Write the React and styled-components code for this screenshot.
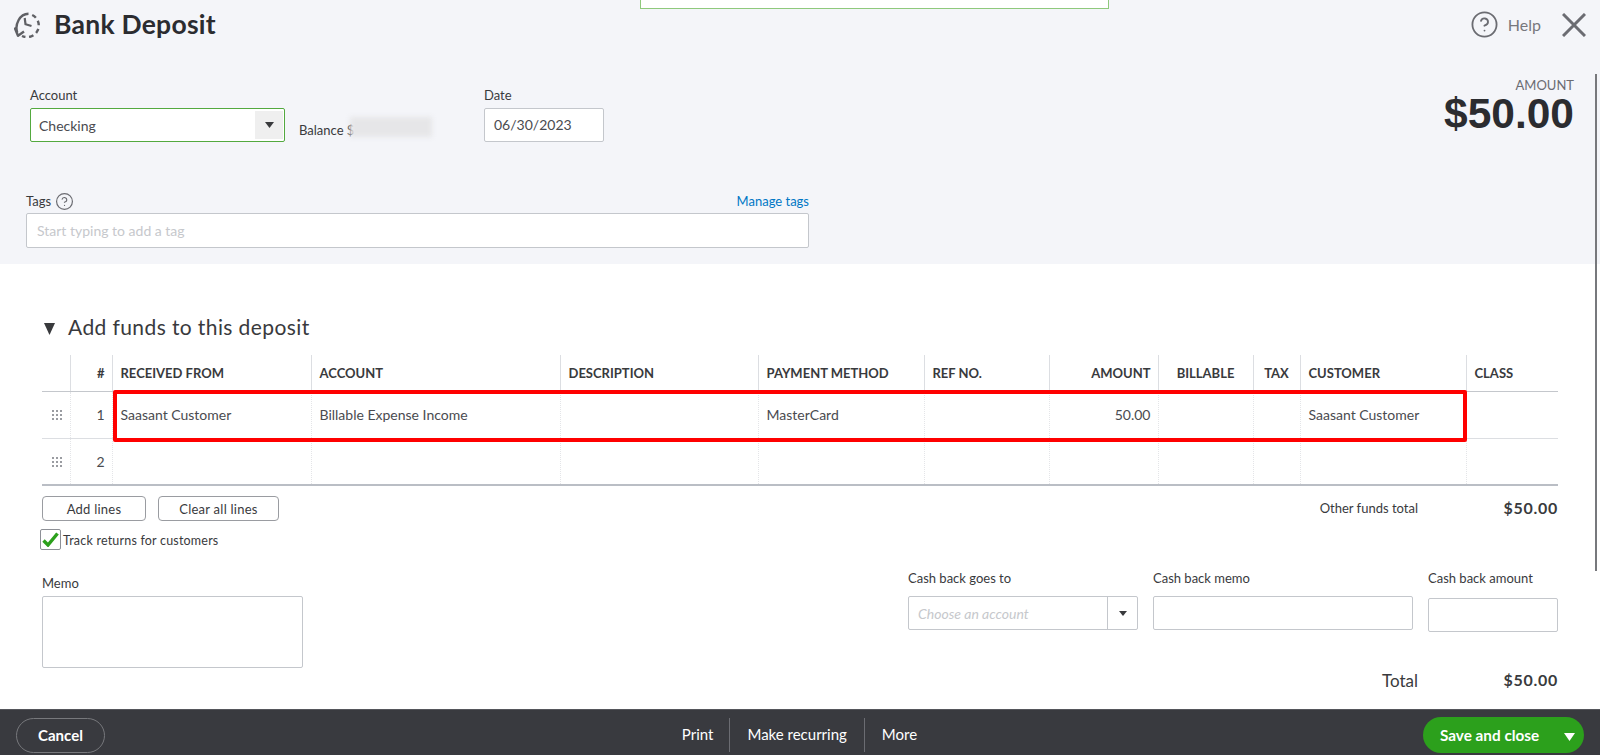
import React from "react";
import styled, { createGlobalStyle } from "styled-components";
import { CircleHelp } from "lucide-react";

const Global = createGlobalStyle`
  html, body { margin: 0; padding: 0; background: #fff; }
  body { font-family: Lato, "Open Sans", "Liberation Sans", sans-serif; color: #393a3d; }
  * { box-sizing: border-box; }
`;

const Page = styled.div`
  position: relative; width: 1600px; height: 755px; overflow: hidden;
  display: flex; flex-direction: column; background: #fff;
`;
const Notice = styled.div`
  position: absolute; top: 0; left: 640px; width: 469px; height: 9px;
  background: #fff; border: 1px solid #8fc97c; border-top: 0;
`;
const Scroll = styled.div`
  position: absolute; top: 74px; left: 1595px; width: 2px; height: 497px; background: #77787c;
`;
const Header = styled.header`
  height: 264px; flex: none; background: #f4f5f9; padding: 12px 14px 0;
`;
const TitleBar = styled.div`
  height: 25px; display: flex; align-items: center; justify-content: space-between;
`;
const TitleGroup = styled.div`display: flex; align-items: center; gap: 13px;`;
const Title = styled.h1`
  margin: 0; font-size: 26.5px; font-weight: 700; color: #2b2c30; line-height: 25px; letter-spacing: 0.25px;
`;
const HelpGroup = styled.div`display: flex; align-items: center; color: #6b6c72;`;
const HelpText = styled.span`font-size: 16px; margin-left: 9px; margin-right: 21px; color: #77787d;`;
const FieldRow = styled.div`
  height: 116px; margin-top: 40px; padding: 0 12px 0 16px;
  display: flex; justify-content: space-between;
`;
const FieldGroup = styled.div`display: flex; padding-top: 10px;`;
const Field = styled.div`
  width: ${(p) => p.$w}px; display: flex; flex-direction: column; gap: 5px;
`;
const Label = styled.label`
  font-size: 13px; line-height: 16px; color: #393a3d; white-space: nowrap;
`;
const SelectBox = styled.div`
  height: 34px; display: flex; align-items: center; justify-content: space-between;
  background: #fff; border: 1px solid #53a93f; border-radius: 2px; padding: 2px 1px 2px 8px;
  font-size: 14px; color: #4a4b50;
`;
const ArrowBox = styled.div`
  width: 28px; align-self: stretch; background: #efefef;
  display: flex; align-items: center; justify-content: center;
`;
const Balance = styled.div`
  position: relative; width: 185px; margin-left: 14px; padding-top: 35px;
  font-size: 13px; line-height: 16px; color: #393a3d;
`;
const BlurMask = styled.div`
  position: absolute; left: 51px; top: 30px; width: 82px; height: 20px;
  background: #e6e6e8; filter: blur(2.5px);
`;
const Input = styled.div`
  height: ${(p) => p.$h || 34}px; width: ${(p) => (p.$w ? p.$w + "px" : "auto")};
  background: #fff; border: 1px solid #c4c7cc; border-radius: 2px;
  font-size: 14px; line-height: 1; padding: 0 9px; display: flex; align-items: center; color: #4a4b50;
`;
const AmountBlock = styled.div`text-align: right;`;
const AmountLabel = styled.div`font-size: 13px; line-height: 16px; color: #6b6c72;`;
const AmountValue = styled.div`
  font-family: "Liberation Sans", sans-serif; font-size: 42.5px; font-weight: 700; line-height: 34px; margin-top: 4px; color: #2b2c30;
`;
const TagsBlock = styled.div`width: 783px; margin-left: 12px;`;
const TagsTop = styled.div`
  height: 16px; display: flex; justify-content: space-between; align-items: center; margin-bottom: 4px;
`;
const TagsLabel = styled.div`
  display: flex; align-items: center; gap: 4px; font-size: 13px; color: #393a3d;
`;
const LinkText = styled.a`font-size: 13px; color: #0077c5;`;
const TagInput = styled(Input)`padding-left: 10px;`;
const Placeholder = styled.span`
  color: #c6c8cc; font-style: ${(p) => (p.$italic ? "italic" : "normal")}; font-size: 14px;
`;
const Main = styled.main`flex: 1; padding: 51px 42px 0;`;
const SectionHead = styled.div`
  height: 24px; display: flex; align-items: center; gap: 13px; margin-left: 2px; margin-bottom: 16px;
`;
const SectionCaret = styled.span`display: flex; margin-top: 3px;`;
const SectionTitle = styled.h2`margin: -2px 0 0; font-size: 21px; font-weight: 400; color: #393a3d; letter-spacing: 0.4px;`;
const TableWrap = styled.div`position: relative;`;
const RedBox = styled.div`
  position: absolute; left: 71px; top: 35px; width: 1354px; height: 52px;
  border: 4px solid #f00; border-radius: 2px;
`;
const Table = styled.table`
  width: 1516px; border-collapse: collapse; table-layout: fixed;
  border-bottom: 2px solid #babec5;
`;
const alignPad = (a) => (a === "right" ? "0 7px 0 0" : a === "center" ? "0" : "0 0 0 8px");
const Th = styled.th`
  height: 36px; padding: ${(p) => alignPad(p.$align)};
  font-size: 13px; font-weight: 700; color: #393a3d; white-space: nowrap;
  text-align: ${(p) => p.$align || "left"};
  border-left: 1px solid #dcdee2; border-bottom: 1px solid #c4c7cc;
  &:first-child { border-left: 0; }
`;
const Td = styled.td`
  height: 47px; padding: ${(p) => alignPad(p.$align)};
  font-size: 14px; color: #4a4b50; white-space: nowrap;
  text-align: ${(p) => p.$align || "left"};
  border-left: 1px dotted #e4e5e8; border-bottom: 1px solid #dcdee2;
  tr:last-child > & { border-bottom: 0; }
`;
const GripCell = styled(Td)`border-left: 0; padding: 0 0 0 2px; text-align: center;`;
const BelowTable = styled.div`
  display: flex; justify-content: space-between; align-items: flex-start; margin-top: 10px;
`;
const ButtonRow = styled.div`display: flex; gap: 12px;`;
const GhostButton = styled.button`
  width: ${(p) => p.$w}px; height: 25px; background: #fff; border: 1px solid #9a9ca1; border-radius: 4px;
  font: 400 13px Lato, sans-serif; letter-spacing: 0.25px; color: #393a3d; padding: 0;
`;
const CheckRow = styled.div`
  display: flex; align-items: center; gap: 2px; margin: 8px 0 0 -2px;
  font-size: 12.5px; color: #393a3d; letter-spacing: 0.2px;
`;
const CheckText = styled.span`padding-top: 2px;`;
const CheckBox = styled.div`
  width: 21px; height: 21px; background: #fff; border: 1px solid #8d9096; border-radius: 2px;
  display: flex; align-items: center; justify-content: center;
`;
const Summary = styled.div`display: flex; align-items: center; height: 24px; justify-content: flex-end;`;
const SummaryLabel = styled.span`font-size: ${(p) => (p.$big ? 17 : 13)}px; color: #393a3d;`;
const SummaryValue = styled.span`
  width: 140px; text-align: right; font-size: 16px; font-weight: 700; color: #393a3d; letter-spacing: 0.7px; margin-top: -1px;
`;
const LowerRow = styled.div`display: flex; justify-content: space-between; margin-top: 20px;`;
const MemoField = styled.div`padding-top: 5px; display: flex; flex-direction: column; gap: 5px;`;
const CashColumn = styled.div`display: flex; flex-direction: column;`;
const CashFields = styled.div`display: flex; gap: 15px;`;
const CashField = styled.div`
  width: ${(p) => p.$w}px; display: flex; flex-direction: column; gap: ${(p) => p.$gap}px;
`;
const CashSelect = styled.div`
  height: 34px; display: flex; align-items: stretch; background: #fff;
  border: 1px solid #c4c7cc; border-radius: 2px;
`;
const CashPlaceholder = styled.div`flex: 1; display: flex; align-items: center; padding-left: 9px;`;
const CashArrow = styled.div`
  width: 30px; border-left: 1px solid #c4c7cc; display: flex; align-items: center; justify-content: center;
`;
const TotalWrap = styled.div`margin-top: 36px;`;
const Footer = styled.footer`
  height: 46px; flex: none; background: #393a3f; border-top: 1px solid #55565b;
  padding: 7px 16px 3px; display: grid; grid-template-columns: 1fr auto 1fr; align-items: center;
`;
const CancelButton = styled.button`
  width: 89px; height: 35px; border-radius: 18px; background: transparent; border: 1px solid #77787c;
  color: #fff; font: 700 15px Lato, sans-serif; padding: 0;
`;
const FooterLinks = styled.nav`display: flex; align-items: stretch; height: 34px; margin-right: 2px; color: #fff; font-size: 15px;`;
const FooterLink = styled.span`
  display: flex; align-items: center; padding: 0 17px; margin-bottom: 3px;
  &:first-child { padding: 0 16px 0 18px; }
  & + & { border-left: 1px solid #6b6c72; margin-bottom: 0; padding-bottom: 3px; }
`;
const SaveWrap = styled.div`justify-self: end;`;
const SaveButton = styled.button`
  width: 161px; height: 36px; border-radius: 18px; border: 0; background: #2ca01c; color: #fff;
  display: flex; align-items: center; justify-content: space-between; padding: 0 9px 0 17px;
  font: 700 15.3px Lato, sans-serif;
`;
const SaveCaret = styled.span`display: flex; margin-top: 3px;`;

const Caret = ({ w = 9, h = 6, c = "#393a3d" }) => (
  <svg width={w} height={h} viewBox="0 0 10 7" preserveAspectRatio="none"><path d="M0 0h10L5 7z" fill={c} /></svg>
);

const HistoryIcon = () => (
  <svg width="27" height="26" viewBox="0 0 27 26" fill="none" stroke="#5f6065" strokeWidth="2.4">
    <path d="M3.2 20.5C0.6 12.5 5.6 2 14.5 1.8" />
    <path d="M0.6 15.5 4 23.8 10 19.5" strokeLinejoin="round" />
    <path d="M18.2 3A11.5 11.5 0 0 1 8 24" strokeDasharray="4.6 3.6" />
    <path d="M10.7 6 L11.5 12.2 L17.5 14" strokeWidth="2.2" />
  </svg>
);

const CloseIcon = () => (
  <svg width="24" height="24" viewBox="0 0 24 24" stroke="#6b6c72" strokeWidth="3"><path d="M1 1l22 22M23 1 1 23" /></svg>
);

const Grip = () => (
  <svg width="10" height="10" viewBox="0 0 10 10" fill="#9a9ca1">
    {[0, 4, 8].map((x) => [0, 4, 8].map((y) => <rect key={x + "-" + y} x={x} y={y} width="2" height="2" />))}
  </svg>
);

const Tick = () => (
  <svg width="17" height="15" viewBox="0 0 17 15" fill="none"><path d="M1.5 8.5 6 13 15.5 1.5" stroke="#2ca01c" strokeWidth="3.4" /></svg>
);

const cols = [28, 42, 199, 249, 198, 166, 125, 109, 95, 47, 166, 92];
const heads = [
  ["", "left"], ["#", "right"], ["RECEIVED FROM"], ["ACCOUNT"], ["DESCRIPTION"], ["PAYMENT METHOD"],
  ["REF NO."], ["AMOUNT", "right"], ["BILLABLE", "center"], ["TAX", "center"], ["CUSTOMER"], ["CLASS"],
];
const rows = [
  ["1", "Saasant Customer", "Billable Expense Income", "", "MasterCard", "", "50.00", "", "", "Saasant Customer", ""],
  ["2", "", "", "", "", "", "", "", "", "", ""],
];

export default function App() {
  return (
    <Page>
      <Global />
      <Notice />
      <Scroll />
      <Header>
        <TitleBar>
          <TitleGroup>
            <HistoryIcon />
            <Title>Bank Deposit</Title>
          </TitleGroup>
          <HelpGroup>
            <CircleHelp size={29} strokeWidth={1.5} color="#6b6c72" />
            <HelpText>Help</HelpText>
            <CloseIcon />
          </HelpGroup>
        </TitleBar>
        <FieldRow>
          <FieldGroup>
            <Field $w={255}>
              <Label>Account</Label>
              <SelectBox>
                Checking
                <ArrowBox><Caret /></ArrowBox>
              </SelectBox>
            </Field>
            <Balance>
              Balance $
              <BlurMask />
            </Balance>
            <Field $w={120}>
              <Label>Date</Label>
              <Input>06/30/2023</Input>
            </Field>
          </FieldGroup>
          <AmountBlock>
            <AmountLabel>AMOUNT</AmountLabel>
            <AmountValue>$50.00</AmountValue>
          </AmountBlock>
        </FieldRow>
        <TagsBlock>
          <TagsTop>
            <TagsLabel>Tags <CircleHelp size={19} strokeWidth={1.5} color="#6b6c72" /></TagsLabel>
            <LinkText>Manage tags</LinkText>
          </TagsTop>
          <TagInput $h={35}><Placeholder>Start typing to add a tag</Placeholder></TagInput>
        </TagsBlock>
      </Header>
      <Main>
        <SectionHead>
          <SectionCaret><Caret w={11} h={12} c="#393a3d" /></SectionCaret>
          <SectionTitle>Add funds to this deposit</SectionTitle>
        </SectionHead>
        <TableWrap>
          <Table>
            <colgroup>{cols.map((w, i) => <col key={i} style={{ width: w }} />)}</colgroup>
            <thead>
              <tr>{heads.map(([t, a], i) => <Th key={i} $align={a}>{t}</Th>)}</tr>
            </thead>
            <tbody>
              {rows.map((r) => (
                <tr key={r[0]}>
                  <GripCell><Grip /></GripCell>
                  {r.map((c, i) => <Td key={i} $align={i === 0 || i === 6 ? "right" : "left"}>{c}</Td>)}
                </tr>
              ))}
            </tbody>
          </Table>
          <RedBox />
        </TableWrap>
        <BelowTable>
          <div>
            <ButtonRow>
              <GhostButton $w={104}>Add lines</GhostButton>
              <GhostButton $w={121}>Clear all lines</GhostButton>
            </ButtonRow>
            <CheckRow>
              <CheckBox><Tick /></CheckBox>
              <CheckText>Track returns for customers</CheckText>
            </CheckRow>
          </div>
          <Summary>
            <SummaryLabel>Other funds total</SummaryLabel>
            <SummaryValue>$50.00</SummaryValue>
          </Summary>
        </BelowTable>
        <LowerRow>
          <MemoField>
            <Label>Memo</Label>
            <Input $w={261} $h={72} />
          </MemoField>
          <CashColumn>
            <CashFields>
              <CashField $w={230} $gap={10}>
                <Label>Cash back goes to</Label>
                <CashSelect>
                  <CashPlaceholder><Placeholder $italic>Choose an account</Placeholder></CashPlaceholder>
                  <CashArrow><Caret w={8} h={5} /></CashArrow>
                </CashSelect>
              </CashField>
              <CashField $w={260} $gap={10}>
                <Label>Cash back memo</Label>
                <Input />
              </CashField>
              <CashField $w={130} $gap={12}>
                <Label>Cash back amount</Label>
                <Input />
              </CashField>
            </CashFields>
            <TotalWrap>
              <Summary>
                <SummaryLabel $big>Total</SummaryLabel>
                <SummaryValue>$50.00</SummaryValue>
              </Summary>
            </TotalWrap>
          </CashColumn>
        </LowerRow>
      </Main>
      <Footer>
        <div><CancelButton>Cancel</CancelButton></div>
        <FooterLinks>
          <FooterLink>Print</FooterLink>
          <FooterLink>Make recurring</FooterLink>
          <FooterLink>More</FooterLink>
        </FooterLinks>
        <SaveWrap>
          <SaveButton>Save and close <SaveCaret><Caret w={11} h={8} c="#fff" /></SaveCaret></SaveButton>
        </SaveWrap>
      </Footer>
    </Page>
  );
}
